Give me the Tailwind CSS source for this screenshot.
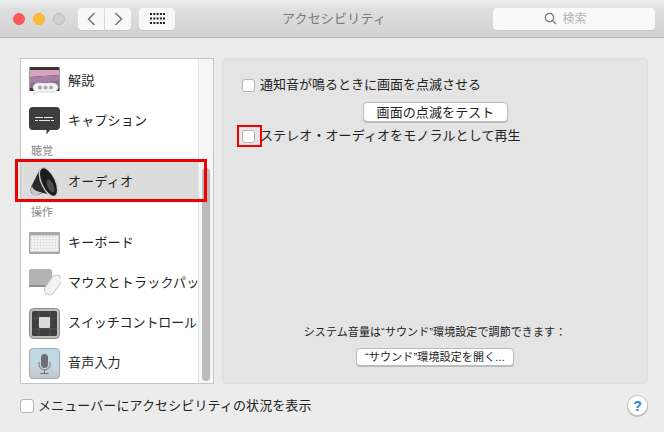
<!DOCTYPE html>
<html><head><meta charset="utf-8">
<script src="https://cdn.jsdelivr.net/npm/@tailwindcss/browser@4"></script>
</head>
<body class="m-0">
<div class="relative w-[664px] h-[432px] overflow-hidden bg-[#ececec] text-[13px] text-[#222] font-['Liberation_Sans','Noto_Sans_CJK_JP',sans-serif]">
  <!-- title bar -->
  <header class="h-[38px] flex items-center border-b border-[#b4b4b4] bg-[linear-gradient(#ececec_0,#ececec_2px,#e0e0e0_8px,#dadada_20px,#d2d2d2_37px)] pl-[13px] pr-[9px]">
    <div class="flex gap-2 items-center">
      <span class="w-3 h-3 rounded-full bg-[#fc5b57] border border-[#ef5550]"></span>
      <span class="w-3 h-3 rounded-full bg-[#fdbb2e] border border-[#f0b02a]"></span>
      <span class="w-3 h-3 rounded-full bg-[#cfcfcf] border border-[#bdbdbd]"></span>
    </div>
    <div class="flex gap-px ml-[13px]">
      <button class="w-[26px] h-[22px] rounded-l-[4px] bg-[#f8f8f8] shadow-[0_1px_0_#c4c4c4] flex items-center justify-center">
        <svg width="9" height="14" viewBox="0 0 9 14"><path d="M7.5 1 1.5 7l6 6" fill="none" stroke="#6e6e6e" stroke-width="1.4"/></svg>
      </button>
      <button class="w-[26px] h-[22px] rounded-r-[4px] bg-[#f8f8f8] shadow-[0_1px_0_#c4c4c4] flex items-center justify-center">
        <svg width="9" height="14" viewBox="0 0 9 14"><path d="M1.5 1l6 6-6 6" fill="none" stroke="#6e6e6e" stroke-width="1.4"/></svg>
      </button>
    </div>
    <button class="ml-2 w-9 h-[22px] rounded-[4px] bg-[#f8f8f8] shadow-[0_1px_0_#c4c4c4] flex items-center justify-center">
      <svg width="15" height="11" viewBox="0 0 15 11" fill="#222">
        <rect x="0" y="0" width="2" height="2"/><rect x="3.3" y="0" width="2" height="2"/><rect x="6.6" y="0" width="2" height="2"/><rect x="9.9" y="0" width="2" height="2"/><rect x="13" y="0" width="2" height="2"/>
        <rect x="0" y="4.5" width="2" height="2"/><rect x="3.3" y="4.5" width="2" height="2"/><rect x="6.6" y="4.5" width="2" height="2"/><rect x="9.9" y="4.5" width="2" height="2"/><rect x="13" y="4.5" width="2" height="2"/>
        <rect x="0" y="9" width="2" height="2"/><rect x="3.3" y="9" width="2" height="2"/><rect x="6.6" y="9" width="2" height="2"/><rect x="9.9" y="9" width="2" height="2"/><rect x="13" y="9" width="2" height="2"/>
      </svg>
    </button>
    <div class="w-[164px] ml-[77px] text-[#777] text-[13px] text-center tracking-[0.2px]">アクセシビリティ</div>
    <div class="ml-[77px] w-[162px] h-[22px] rounded-[4px] bg-[#f9f9f9] shadow-[0_1px_0_#c8c8c8] flex items-center justify-center gap-[5px] text-[#b5b5b5] text-xs pr-[17px]">
      <svg width="13" height="13" viewBox="0 0 13 13"><circle cx="5.5" cy="5.5" r="4.2" fill="none" stroke="#777" stroke-width="1.2"/><path d="M8.6 8.6 12 12" stroke="#777" stroke-width="1.3"/></svg>
      <span>検索</span>
    </div>
  </header>

  <main class="flex pt-5 pl-5 gap-2">
    <!-- sidebar -->
    <aside class="relative w-[194px] h-[326px] bg-white border border-[#c4c4c4] flex overflow-hidden">
      <ul class="w-[177px] shrink-0 pt-[2px] overflow-hidden">
        <li class="h-10 flex items-center gap-2 pl-2">
          <svg class="shrink-0" width="31" height="28" viewBox="0 0 31 28"><rect x="0.5" y="0" width="30" height="24" fill="#3a3434"/><path d="M1 3h29v5L1 10z" fill="#d8a3c0"/><path d="M1 10 30 8v6L1 17z" fill="#a77fa8"/><path d="M1 17l29-3v7H1z" fill="#8b6c96"/><path d="M6 27c1 0 2-1 3-2h14c4 0 6-2 6-4.500s-2-4.500-6-4.500H10c-4 0-6 2-6 4.500 0 1.500.5 3 2 3.500 0 1-.5 2-2 3z" fill="#f4f4f4" stroke="#c0c0c0" stroke-width=".6"/><circle cx="11" cy="20.500" r="2" fill="#aaa"/><circle cx="16.500" cy="20.500" r="2" fill="#aaa"/><circle cx="22" cy="20.500" r="2" fill="#aaa"/></svg>
          <span class="tracking-[0.2px]">解説</span>
        </li>
        <li class="h-10 flex items-center gap-2 pl-2">
          <svg class="shrink-0" width="31" height="28" viewBox="0 0 31 28"><path d="M4 0h23a4 4 0 0 1 4 4v15a4 4 0 0 1-4 4H21l-3.500 4.500V23H4a4 4 0 0 1-4-4V4a4 4 0 0 1 4-4z" fill="#3d3d3d"/><path d="M6 10.500h8M15 10.500h9M6 13.500h3M10 13.500h11M22 13.500h3" stroke="#e8e8e8" stroke-width="1"/></svg>
          <span class="tracking-[0.2px]">キャプション</span>
        </li>
        <li class="h-[21px] flex items-center pl-[10px] text-[11px] text-[#8a8a8a]">聴覚</li>
        <li class="h-10 flex items-center gap-[6px] pl-2 bg-[#dcdcdc]">
          <svg class="shrink-0" width="33" height="33" viewBox="0 0 33 33"><path d="M11 3 2 21c-1 3 0 7 3 8 3 1 6-1 8-2l15 2z" fill="#2a2a2a"/><path d="M3 20c-2 3-1 8 2 9 3 1 6-1 8-3-4 0-9-2-10-6z" fill="#c9c9c9"/><ellipse cx="19.500" cy="16" rx="7" ry="15.500" transform="rotate(-25 19.500 16)" fill="#1c1c1c" stroke="#cfcfcf" stroke-width="1.300"/><ellipse cx="21.500" cy="20" rx="3" ry="7" transform="rotate(-25 21.500 20)" fill="#4d4d4d"/></svg>
          <span class="tracking-[0.2px]">オーディオ</span>
        </li>
        <li class="h-[21px] flex items-center pl-[10px] text-[11px] text-[#8a8a8a]">操作</li>
        <li class="h-10 flex items-center gap-2 pl-2">
          <svg class="shrink-0" width="31" height="22" viewBox="0 0 31 22"><rect x="0" y="0" width="31" height="22" rx="1" fill="#a8a8a8"/><rect x="1" y="3" width="29" height="17" fill="#d4d4d4"/><path d="M2 6h27M2 9h27M2 12h27M2 15h27M2 18h27M4 4v15M7 4v15M10 4v15M13 4v15M16 4v15M19 4v15M22 4v15M25 4v15M28 4v15" stroke="#f5f5f5" stroke-width="1.400"/></svg>
          <span class="tracking-[0.2px]">キーボード</span>
        </li>
        <li class="h-10 flex items-center gap-[7px] pl-2">
          <svg class="shrink-0" width="32" height="30" viewBox="0 0 32 30"><path d="M0 3a2 2 0 0 1 2-2h19a2 2 0 0 1 2 2v14H0z" fill="#b3b3b3"/><rect x="0" y="17" width="23" height="2" fill="#8f8f8f"/><rect x="19" y="6" width="10" height="22" rx="5" transform="rotate(35 24 17)" fill="#f3f3f3" stroke="#c8c8c8"/></svg>
          <span class="tracking-[0.2px] whitespace-nowrap">マウスとトラックパッド</span>
        </li>
        <li class="h-10 flex items-center gap-2 pl-2">
          <svg class="shrink-0" width="31" height="31" viewBox="0 0 31 31"><rect x="0.500" y="0.500" width="30" height="30" rx="4" fill="#bcbcbc" stroke="#8a8a8a"/><rect x="3" y="3" width="25" height="25" rx="1.500" fill="#3f3f3f"/><path d="M10 3v25M21 3v25M3 10h25M3 21h25" stroke="#555"/><rect x="10" y="9" width="11" height="11" rx="1" fill="#dcdcdc"/></svg>
          <span class="tracking-[-0.1px] whitespace-nowrap">スイッチコントロール</span>
        </li>
        <li class="h-10 flex items-center gap-2 pl-2">
          <svg class="shrink-0" width="31" height="31" viewBox="0 0 31 31"><defs><linearGradient id="m" x1="0" y1="0" x2="0" y2="1"><stop offset="0" stop-color="#bcd9e6"/><stop offset=".55" stop-color="#c3d9e0"/><stop offset="1" stop-color="#c3c6cc"/></linearGradient></defs><rect x="0.500" y="0.500" width="30" height="30" rx="3" fill="url(#m)" stroke="#a4adb4"/><rect x="12" y="6" width="7" height="14" rx="3.500" fill="#6d6f72"/><path d="M10 14v2.500c0 3 2.500 5.500 5.500 5.500s5.500-2.500 5.500-5.500V14M15.500 22v3M11.500 25.500h8" fill="none" stroke="#6d6f72" stroke-width="1"/></svg>
          <span class="tracking-[0.2px]">音声入力</span>
        </li>
      </ul>
      <div class="flex-1 bg-[#f6f6f6] border-l border-[#e4e4e4] relative">
        <div class="absolute left-[3px] top-[109px] w-[8px] h-[213px] rounded-full bg-[#bbbbbb]"></div>
      </div>
    </aside>

    <!-- right panel -->
    <section class="w-[426px] h-[326px] rounded-[4px] bg-[#e4e4e4] border border-[#dedede] flex flex-col">
      <label class="flex items-center gap-[5px] ml-[19px] mt-[17px] h-[18px]">
        <span class="w-[13px] h-[13px] rounded-[3px] bg-white border border-[#b4b4b4]"></span>
        <span>通知音が鳴るときに画面を点滅させる</span>
      </label>
      <button class="self-start ml-[140px] mt-[8px] w-[145px] h-[20px] rounded-[4px] bg-white border border-[#bcbcbc] shadow-[0_1px_0_#bbb] tracking-[0.1px] text-[13px] leading-none">画面の点滅をテスト</button>
      <label class="flex items-center gap-[5px] ml-[19px] mt-[5px] h-[18px] tracking-[0.1px]">
        <span class="w-[13px] h-[13px] rounded-[3px] bg-white border border-[#b4b4b4]"></span>
        <span>ステレオ・オーディオをモノラルとして再生</span>
      </label>
      <div class="mt-auto flex flex-col items-center mb-[17px]">
        <p class="text-[11px] tracking-[0.1px] leading-none">システム音量は“サウンド”環境設定で調節できます：</p>
        <button class="mt-[10px] w-[158px] h-[18px] rounded-[4px] bg-white border border-[#bcbcbc] shadow-[0_1px_0_#bbb] text-[11px] tracking-[0.15px] leading-none">“サウンド”環境設定を開く...</button>
      </div>
    </section>
  </main>

  <footer class="flex items-center justify-between pl-5 pr-4 mt-[11px] h-[21px]">
    <label class="flex items-center gap-[4px] tracking-[0.1px]">
      <span class="w-[14px] h-[14px] rounded-[3px] bg-white border border-[#b4b4b4]"></span>
      <span>メニューバーにアクセシビリティの状況を表示</span>
    </label>
    <button class="w-[21px] h-[21px] rounded-full bg-white border border-[#c4c4c4] shadow-[0_1px_0_#bbb] text-[#2a7fe0] text-sm font-bold leading-none flex items-center justify-center">?</button>
  </footer>

  <!-- annotation rectangles -->
  <div class="absolute left-[15px] top-[159px] w-[192px] h-[43px] border-[3px] border-[#f00000]"></div>
  <div class="absolute left-[237px] top-[125px] w-[25px] h-[22px] border-[2px] border-[#f00000]"></div>
</div>
</body></html>
